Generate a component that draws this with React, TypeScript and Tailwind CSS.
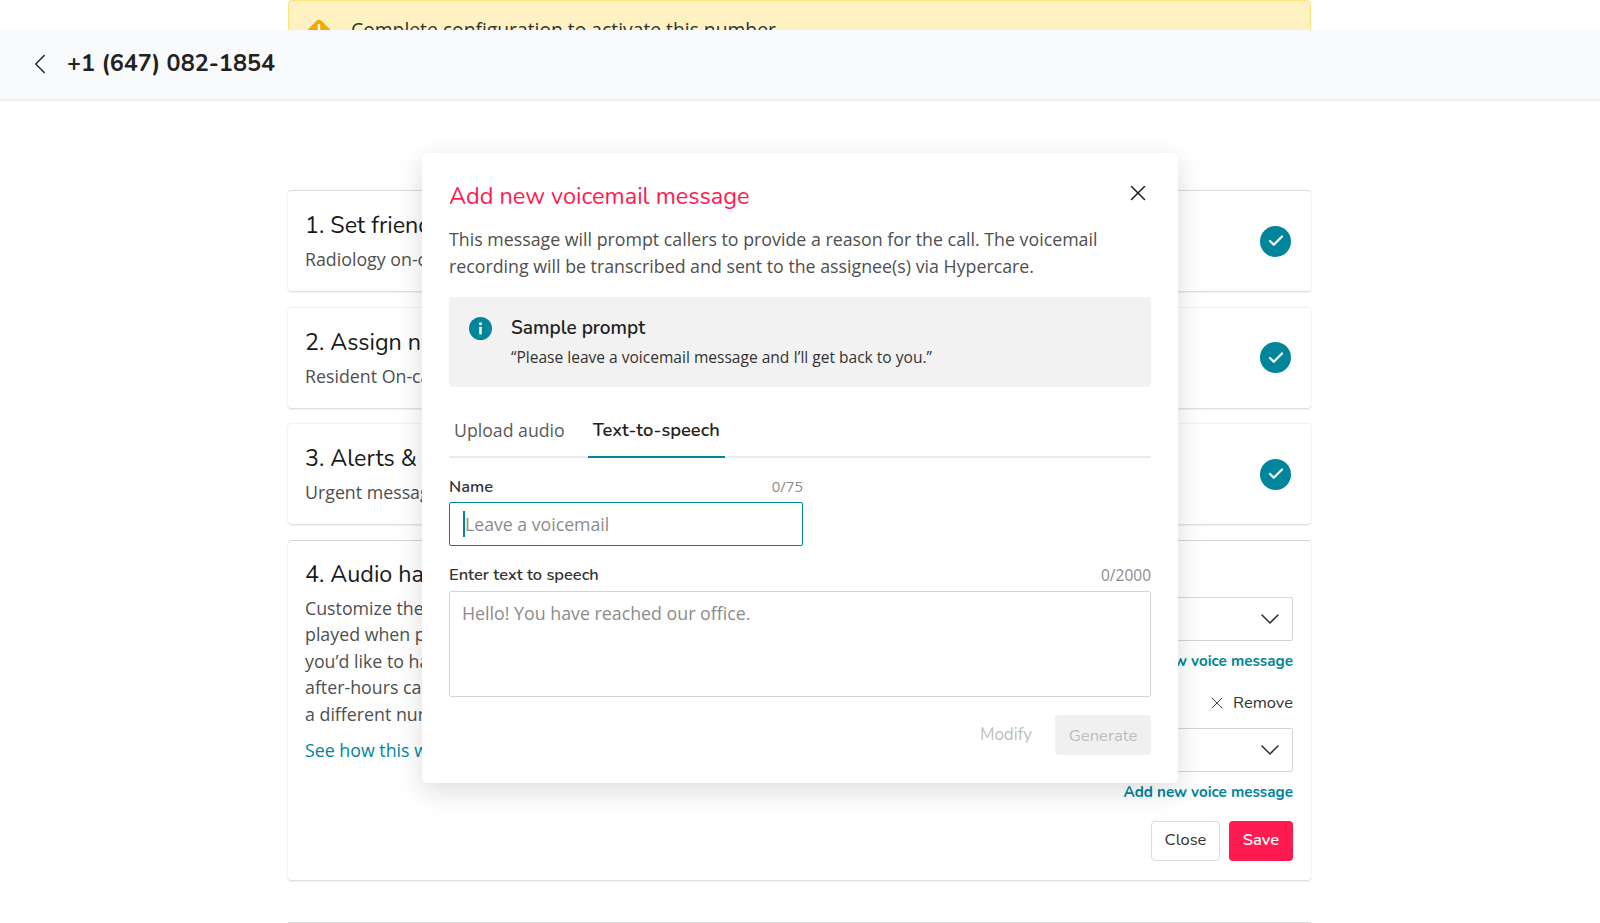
import React from 'react';
import clsx from 'clsx';
import { Check, ChevronDown, ChevronLeft, X } from 'lucide-react';

const heading = "font-['Nunito','Noto_Sans','Open_Sans',sans-serif]";
const body = "font-['Open_Sans',sans-serif]";

interface StepCardProps {
  title: string;
  subtitle: string;
  faintTop?: boolean;
}

function StepCard({ title, subtitle, faintTop }: StepCardProps) {
  return (
    <div
      className={clsx(
        'flex h-[101px] items-center justify-between rounded border-t bg-white pl-[17px] pr-5 shadow-[0_1px_2px_rgba(0,0,0,0.18)]',
        faintTop ? 'border-[#f3f3f3]' : 'border-[#dcdcdc]',
      )}
    >
      <div>
        <h3 className={`${heading} text-[23.3px] leading-[30px] text-[#1a1a1a]`}>{title}</h3>
        <p className={`${body} mt-[6px] text-[17.8px] leading-[26px] text-[#4f4f4f]`}>{subtitle}</p>
      </div>
      <span className="flex h-[31px] w-[31px] items-center justify-center rounded-full bg-[#00859a]">
        <Check className="h-[18px] w-[18px] text-white" strokeWidth={3} />
      </span>
    </div>
  );
}

function VoiceSelect() {
  return (
    <div className="flex h-[44px] w-[500px] items-center justify-end rounded-[2px] border border-[#d4d4d4] bg-white pr-[6px]">
      <ChevronDown className="h-[32px] w-[32px] text-[#333333]" strokeWidth={1.2} />
    </div>
  );
}

function AudioCard() {
  return (
    <div className="flex h-[340px] justify-between rounded border-t border-[#d4d4d4] bg-white px-[18px] shadow-[0_1px_2px_rgba(0,0,0,0.18)]">
      <div className="w-[420px] pt-[18px]">
        <h3 className={`${heading} -ml-px text-[23.3px] leading-[30px] text-[#1a1a1a]`}>4. Audio handling</h3>
        <p className={`${body} -ml-px mt-[6px] text-[17.8px] leading-[26.6px] text-[#4f4f4f]`}>
          Customize the message that is
          <br />
          played when patients call. If
          <br />
          you’d like to handle daytime and
          <br />
          after-hours calls separately, add
          <br />
          a different number below.
        </p>
        <a className={`${body} -ml-px mt-[10px] block text-[17.8px] leading-[26px] text-[#00859a]`}>See how this works</a>
      </div>
      <div className="flex flex-col items-end pt-[56px]">
        <VoiceSelect />
        <a className={`${heading} mt-[10px] text-[15.2px] font-bold leading-[20px] text-[#00859a]`}>Add new voice message</a>
        <div className={`${heading} mt-[22px] flex items-center gap-[6px] text-[16.5px] leading-[20px] text-[#333333]`}>
          <X className="h-[20px] w-[20px]" strokeWidth={1.1} />
          Remove
        </div>
        <div className="mt-[15px]">
          <VoiceSelect />
        </div>
        <a className={`${heading} mt-[10px] text-[15.2px] font-bold leading-[20px] text-[#00859a]`}>Add new voice message</a>
        <div className="mt-[19px] flex gap-[9px]">
          <button className={`${heading} h-[40px] w-[69px] rounded border border-[#dcdcdc] bg-white text-[16.5px] text-[#333333]`}>Close</button>
          <button className={`${heading} h-[40px] w-[64px] rounded bg-[#ff1a4f] text-[16.5px] font-semibold text-white`}>Save</button>
        </div>
      </div>
    </div>
  );
}

function VoicemailModal() {
  return (
    <div className="absolute left-[422px] top-[153px] h-[630px] w-[756px] rounded-md bg-white px-[27px] shadow-[0_8px_28px_rgba(0,0,0,0.14)]">
      <div className="flex items-center justify-between pt-[27px]">
        <h2 className={`${heading} text-[23.5px] leading-[32px] text-[#ff1a4f]`}>Add new voicemail message</h2>
        <X className="h-[26px] w-[26px] -translate-y-[3px] text-[#222222]" strokeWidth={1.4} />
      </div>
      <p className={`${body} mt-[14px] w-[680px] text-[17.8px] leading-[26.6px] text-[#4f4f4f]`}>
        This message will prompt callers to provide a reason for the call. The voicemail
        <br />
        recording will be transcribed and sent to the assignee(s) via Hypercare.
      </p>
      <div className="mt-[18px] flex h-[90px] rounded bg-[#f2f2f2] pl-[20px] pt-[20px]">
        <svg viewBox="0 0 24 24" className="h-[23px] w-[23px] shrink-0">
          <circle cx="12" cy="12" r="12" fill="#00859a" />
          <circle cx="12" cy="7" r="1.6" fill="#fff" />
          <rect x="10.7" y="10.2" width="2.6" height="8" rx="0.6" fill="#fff" />
        </svg>
        <div className="ml-[19px]">
          <div className={`${heading} text-[19px] font-semibold leading-[22px] text-[#222222]`}>Sample prompt</div>
          <div className={`${body} mt-[8px] text-[15.55px] leading-[20px] text-[#333333]`}>“Please leave a voicemail message and I’ll get back to you.”</div>
        </div>
      </div>
      <div className="mt-[30px] flex h-[41px] border-b-2 border-[#ebebeb]">
        <div className={`${body} px-[5px] text-[17.7px] leading-[26px] text-[#5a5a5a]`}>Upload audio</div>
        <div className={`${heading} ml-[18px] h-[41px] border-b-2 border-[#00859a] px-[5px] text-[18.3px] font-semibold leading-[26px] text-[#222222]`}>Text-to-speech</div>
      </div>
      <div className="mt-[19px] w-[354px]">
        <div className="flex items-center justify-between">
          <label className={`${heading} text-[16.4px] font-semibold leading-[20px] text-[#333333]`}>Name</label>
          <span className={`${body} -translate-y-px text-[15px] leading-[20px] text-[#8c8c8c]`}>0/75</span>
        </div>
        <div className="mt-[5px] flex h-[44px] items-center rounded-[2px] border border-[#00859a] pl-[13px]">
          <span className="h-[26px] w-[2px] bg-[#00859a]" />
          <span className={`${body} text-[17.7px] text-[#8c8c8c]`}>Leave a voicemail</span>
        </div>
      </div>
      <div className="mt-[19px]">
        <div className="flex items-center justify-between">
          <label className={`${heading} text-[16.4px] font-semibold leading-[20px] text-[#333333]`}>Enter text to speech</label>
          <span className={`${body} text-[15.5px] leading-[20px] text-[#8c8c8c]`}>0/2000</span>
        </div>
        <div className={`${body} mt-[6px] h-[106px] rounded-[2px] border border-[#d4d4d4] px-[12px] pt-[8px] text-[17.8px] leading-[26px] text-[#8c8c8c]`}>
          Hello! You have reached our office.
        </div>
      </div>
      <div className="mt-[18px] flex items-center justify-end gap-[23px]">
        <span className={`${heading} text-[17px] text-[#bdbdbd]`}>Modify</span>
        <button className={`${heading} h-[40px] w-[96px] rounded bg-[#f0f0f0] text-[16.7px] text-[#bdbdbd]`}>Generate</button>
      </div>
    </div>
  );
}

export default function App() {
  return (
    <div className="relative h-[923px] overflow-hidden bg-white">
      <div className="absolute left-0 right-0 top-[30px] z-10 flex h-[69px] items-center bg-[#f9fafc] pb-[2px] pl-[23px] shadow-[0_2px_2px_rgba(0,0,0,0.08)]">
        <ChevronLeft className="h-[34px] w-[34px] text-[#222222]" strokeWidth={1} />
        <h1 className={`${heading} ml-[10px] text-[23.4px] font-bold text-[#222222]`}>+1 (647) 082-1854</h1>
      </div>
      <div className="ml-[288px] mr-[289px] flex flex-col">
        <div className="flex h-[60px] items-center gap-[17px] rounded border border-[#ffe27a] bg-[#fff2c2] pl-[15px]">
          <svg viewBox="0 0 30 30" className="h-[30px] w-[30px]">
            <path d="M15 9 33 27H-3Z" fill="#f5a800" stroke="#f5a800" strokeWidth="8" strokeLinejoin="round" />
            <rect x="13.8" y="9" width="2.4" height="10" fill="#fff" />
          </svg>
          <span className={`${body} text-[19.3px] text-[#333333]`}>Complete configuration to activate this number</span>
        </div>
        <div className="mt-[130px] flex flex-col gap-[15.5px]">
          <StepCard title="1. Set friendly name" subtitle="Radiology on-call line" />
          <StepCard title="2. Assign number" subtitle="Resident On-call" faintTop />
          <StepCard title="3. Alerts & notifications" subtitle="Urgent messages" faintTop />
          <AudioCard />
        </div>
        <div className="mt-[42px] border-t border-[#dcdcdc]" />
      </div>
      <VoicemailModal />
    </div>
  );
}
